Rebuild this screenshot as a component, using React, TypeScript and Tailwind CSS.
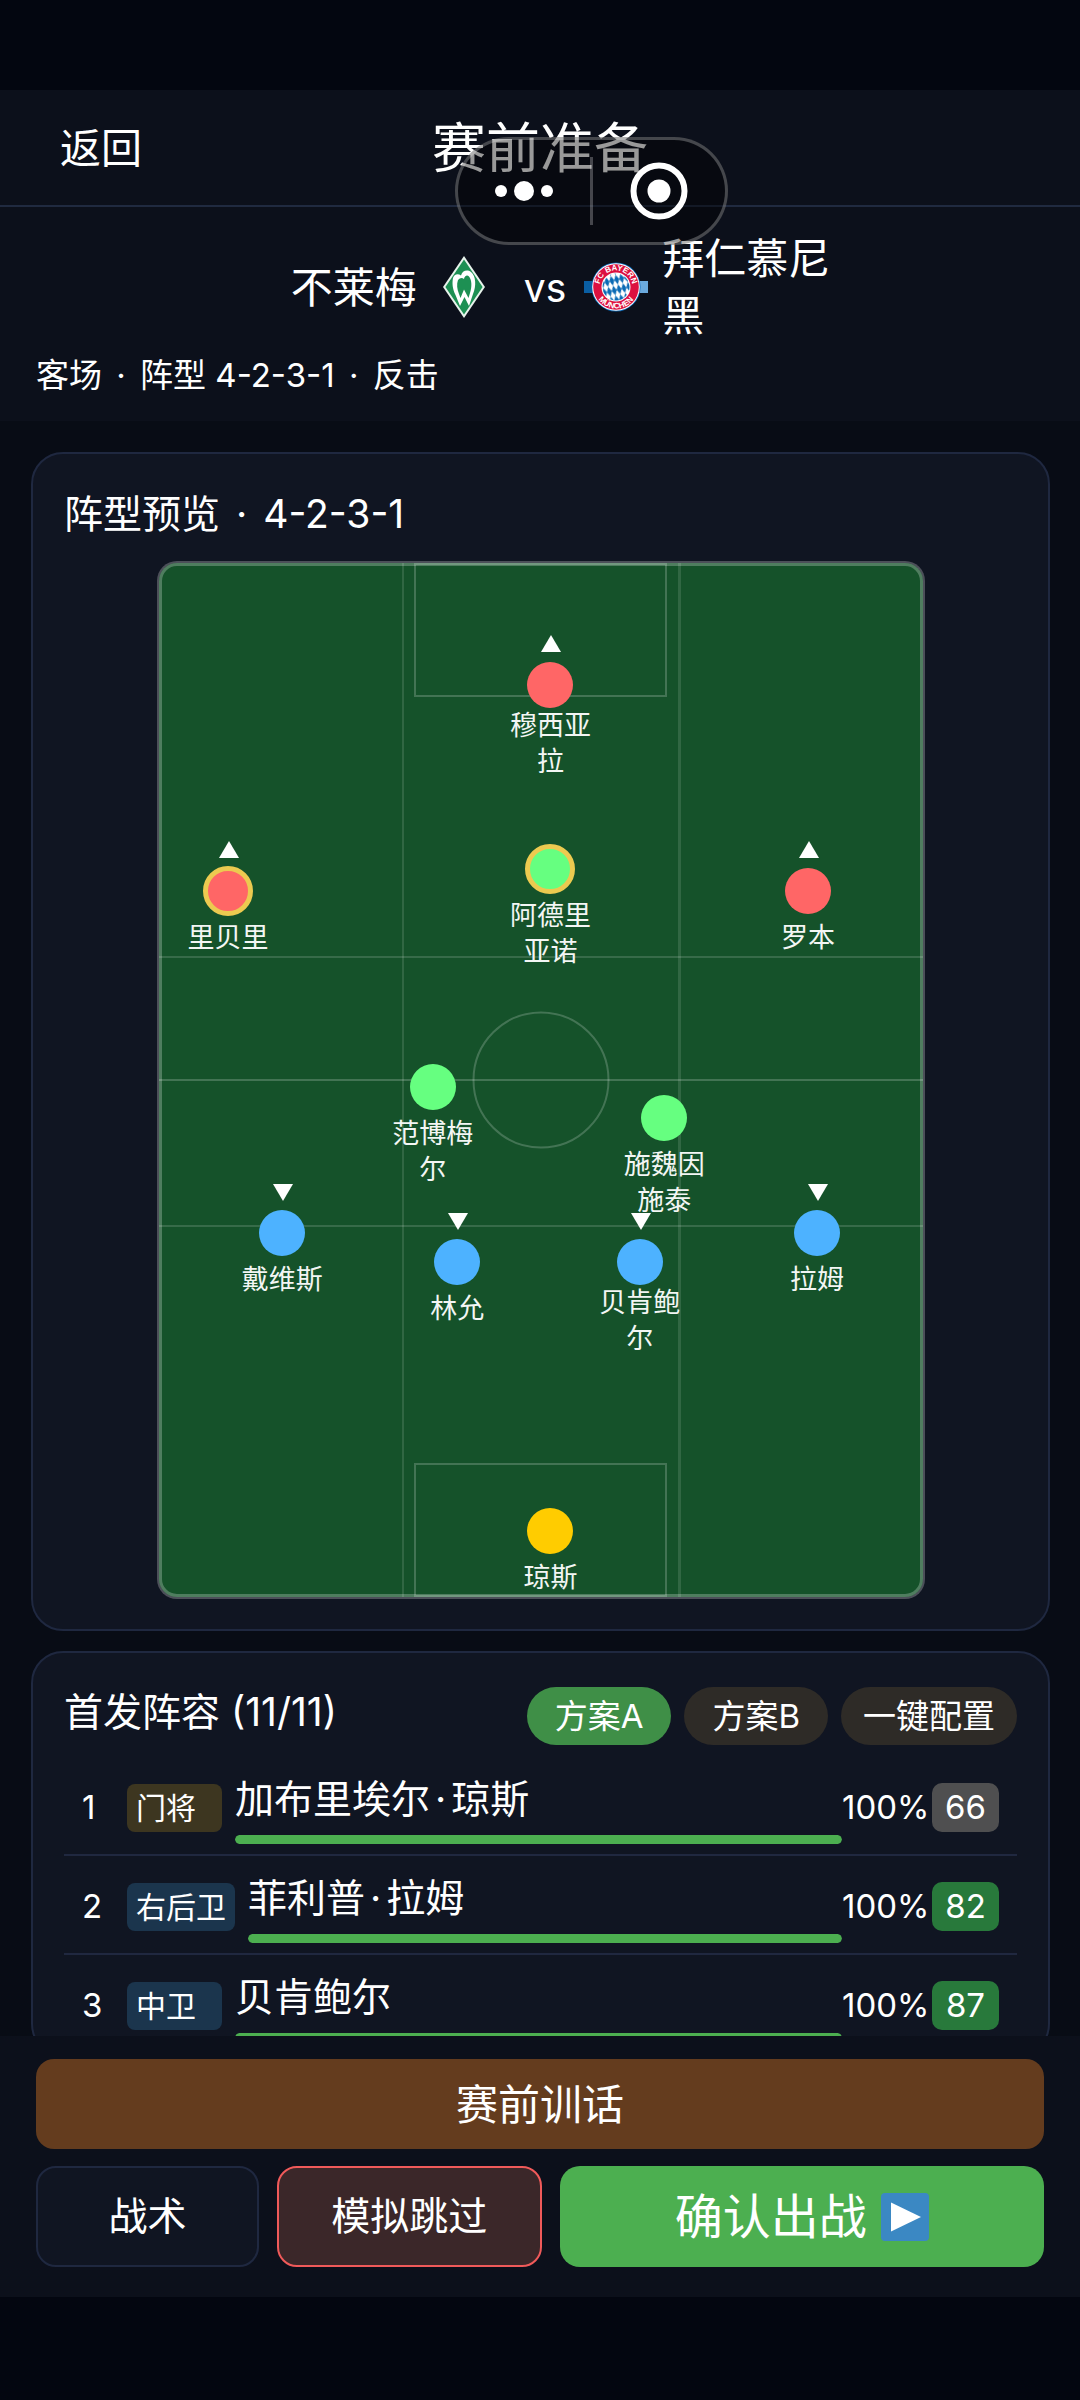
import { CSSProperties } from "react";

type Player = {
  name: string;
  x: number;
  y: number;
  color: string;
  arrow?: "up" | "down";
  star?: boolean;
};

const RED = "bg-[#ff6666]";
const GREEN = "bg-[#66ff80]";
const BLUE = "bg-[#4db2ff]";
const YELLOW = "bg-[#ffcc00]";

// x / y are percentages of the pitch
const players: Player[] = [
  { name: "穆西亚拉", x: 51.3, y: 11.8, color: RED, arrow: "up" },
  { name: "里贝里", x: 9.1, y: 31.7, color: RED, arrow: "up", star: true },
  { name: "阿德里亚诺", x: 51.3, y: 29.6, color: GREEN, star: true },
  { name: "罗本", x: 85, y: 31.7, color: RED, arrow: "up" },
  { name: "范博梅尔", x: 35.9, y: 50.7, color: GREEN },
  { name: "施魏因施泰", x: 66.2, y: 53.7, color: GREEN },
  { name: "戴维斯", x: 16.2, y: 64.8, color: BLUE, arrow: "down" },
  { name: "林允", x: 39.1, y: 67.6, color: BLUE, arrow: "down" },
  { name: "贝肯鲍尔", x: 63, y: 67.6, color: BLUE, arrow: "down" },
  { name: "拉姆", x: 86.2, y: 64.8, color: BLUE, arrow: "down" },
  { name: "琼斯", x: 51.3, y: 93.6, color: YELLOW },
];

const lineup = [
  { no: 1, pos: "门将", name: "加布里埃尔·琼斯", fit: 100, rating: 66, tag: "bg-[#3d3620]", box: "bg-[#4f4f50]" },
  { no: 2, pos: "右后卫", name: "菲利普·拉姆", fit: 100, rating: 82, tag: "bg-[#1b354d]", box: "bg-[#28793b]" },
  { no: 3, pos: "中卫", name: "贝肯鲍尔", fit: 100, rating: 87, tag: "bg-[#1b354d]", box: "bg-[#28793b]" },
];

// Gives every middle dot in a label some air on both sides
function Dotted({ text }: { text: string }) {
  return (
    <>
      {text.split("·").map((part, i) => (
        <span key={i}>
          {i > 0 && <span className="mx-[5px]">·</span>}
          {part}
        </span>
      ))}
    </>
  );
}

function BremenLogo() {
  return (
    <svg viewBox="0 0 42 62" className="h-[62px] w-[42px]" aria-hidden="true">
      <path d="M21 0 42 31 21 62 0 31Z" fill="#e8f3ec" />
      <path d="M21 3.500 39.600 31 21 58.500 2.400 31Z" fill="#1d9053" />
      <path
        d="M10 22C11 18 15 17 18 19.500C19 15 24 13 28 16C33 20 33.500 30 30 38L26 50L21.500 41L17 50L12.500 39C9.500 33 9 27 10 22ZM15 24C13.500 28 14 33 16 38L17.500 42L21 33.500L25.500 42L27 37C29 31 29 24 26 20.500C24 18.500 21.500 20 21 23Q18 20.500 15 24Z"
        fill="#fff"
        fillRule="evenodd"
      />
    </svg>
  );
}

function BayernLogo() {
  return (
    <svg viewBox="0 0 64 50" className="h-[50px] w-16" aria-hidden="true">
      <defs>
        <pattern id="lozenge" width="5" height="10" patternUnits="userSpaceOnUse" patternTransform="rotate(-14)">
          <rect width="5" height="10" fill="#fff" />
          <path d="M2.500 0 5 5 2.500 10 0 5Z" fill="#0a6ab5" />
        </pattern>
        <path id="arcTop" d="M15.500 25A16.500 16.500 0 0 1 48.500 25" />
        <path id="arcBottom" d="M10.500 25A21.500 21.500 0 0 0 53.500 25" />
      </defs>
      <rect x="0" y="19" width="14" height="12" fill="#0a5ea3" />
      <rect x="50" y="19" width="14" height="12" fill="#6ba9dd" />
      <circle cx="32" cy="25" r="24.500" fill="#0a66b2" />
      <circle cx="32" cy="25" r="23.800" fill="#fff" />
      <circle cx="32" cy="25" r="22.800" fill="#dc1140" />
      <circle cx="32" cy="25" r="14.500" fill="#fff" />
      <circle cx="32" cy="25" r="13.500" fill="url(#lozenge)" />
      <text fontFamily="Liberation Sans, sans-serif" fontSize="8" fontWeight="700" fill="#fff" textAnchor="middle">
        <textPath href="#arcTop" startOffset="50%">
          FC BAYERN
        </textPath>
      </text>
      <text fontFamily="Liberation Sans, sans-serif" fontSize="8" fontWeight="700" fill="#fff" textAnchor="middle">
        <textPath href="#arcBottom" startOffset="50%">
          MÜNCHEN
        </textPath>
      </text>
    </svg>
  );
}

function Capsule() {
  return (
    <div className="absolute top-[137px] left-[455px] z-20 flex h-[108px] w-[273px] items-center rounded-full border-3 border-white/25 bg-black/40">
      <button type="button" aria-label="更多" className="flex flex-1 justify-center">
        <svg viewBox="0 0 58 20" className="h-5 w-[58px]" fill="#fff">
          <circle cx="6" cy="10" r="6" />
          <circle cx="29" cy="10" r="10" />
          <circle cx="52" cy="10" r="6" />
        </svg>
      </button>
      <span className="h-[68px] w-[3px] bg-white/25" />
      <button type="button" aria-label="关闭" className="flex flex-1 justify-center">
        <svg viewBox="0 0 58 58" className="size-[58px]">
          <circle cx="29" cy="29" r="25.500" fill="none" stroke="#fff" strokeWidth="6" />
          <circle cx="29" cy="29" r="11.500" fill="#fff" />
        </svg>
      </button>
    </div>
  );
}

function Marker({ player }: { player: Player }) {
  const pos: CSSProperties = { left: `${player.x}%`, top: `${player.y}%` };
  const tight = player.arrow && player.name.length > 3;
  return (
    <div className="absolute size-0" style={pos}>
      {player.arrow && (
        <svg viewBox="0 0 20 18" className="absolute -top-[50px] -left-[9px] h-[18px] w-5" fill="#fff" aria-hidden="true">
          <path d={player.arrow === "up" ? "M10 0 20 17H0Z" : "M0 1H20L10 18Z"} />
        </svg>
      )}
      <span
        className={`absolute -top-[23px] -left-[23px] size-[46px] rounded-full ${player.color} ${
          player.star ? "outline-5 -outline-offset-3 outline-[#ecca50]" : ""
        }`}
      />
      <span
        className={`absolute -left-[42px] w-[84px] text-center text-[27px] leading-9 break-all text-[#f3f6f4] ${
          tight ? "top-[23px]" : "top-[29px]"
        }`}
      >
        {player.name}
      </span>
    </div>
  );
}

function Pitch() {
  return (
    <div className="relative mx-auto aspect-[768/1038] w-[81%] max-w-[768px] rounded-[20px] border-2 border-white/25 bg-[#15522a] bg-clip-padding inset-ring-3 inset-ring-white/25">
      <div className="absolute inset-y-0 left-[32%] w-[2px] -translate-x-1/2 bg-white/12" />
      <div className="absolute inset-y-0 left-[68%] w-[3px] bg-white/12" />
      <div className="absolute inset-x-0 top-[38%] h-[2px] bg-white/15" />
      <div className="absolute inset-x-0 top-1/2 h-[2px] -translate-y-1/2 bg-white/20" />
      <div className="absolute inset-x-0 top-[64%] h-[2px] bg-white/15" />
      <div className="absolute top-0 left-[33.5%] h-[13%] w-[33%] border-2 border-white/20" />
      <div className="absolute bottom-0 left-[33.5%] h-[13%] w-[33%] border-2 border-white/20" />
      <div className="absolute top-1/2 left-1/2 size-[137px] -translate-1/2 rounded-full border-2 border-white/20" />
      {players.map((p) => (
        <Marker key={p.name} player={p} />
      ))}
    </div>
  );
}

export default function App() {
  return (
    <div className="relative flex h-screen flex-col overflow-hidden bg-[#030610] pt-[90px] pb-[103px] font-['Inter','Noto_Sans_CJK_SC',sans-serif] text-white">
      <Capsule />

      <header className="grid h-[117px] shrink-0 grid-cols-3 items-center border-b-2 border-[#202a40] bg-[#0c101b] px-[60px] pt-[2px]">
        <button type="button" className="justify-self-start text-[41px]">
          返回
        </button>
        <h1 className="text-center text-[54px] whitespace-nowrap">赛前准备</h1>
      </header>

      <section className="shrink-0 bg-[#0c101b] px-9 pt-[23px] pb-[23px]">
        <div className="mx-auto grid w-fit grid-cols-[1fr_auto_1fr] items-center pl-[10px] text-[42px] leading-[57px]">
          <div className="flex items-center justify-end gap-[26px] pr-[39px]">
            <span className="whitespace-nowrap">不莱梅</span>
            <BremenLogo />
          </div>
          <span className="text-[39px]">vs</span>
          <div className="flex items-center gap-[14px] pl-[18px]">
            <BayernLogo />
            <span className="w-[176px] break-all">拜仁慕尼黑</span>
          </div>
        </div>
        <p className="mt-2 text-[33px] leading-[46px]">
          <Dotted text="客场 · 阵型 4-2-3-1 · 反击" />
        </p>
      </section>

      <main className="flex min-h-0 flex-1 flex-col gap-5 overflow-hidden bg-[#080c15] pt-[31px] pr-[30px] pl-[31px]">
        <section className="shrink-0 rounded-[32px] border-2 border-[#1f2840] bg-[#101522] px-[31px] pt-[31px] pb-[30px]">
          <h2 className="mb-[18px] text-[39px] leading-[58px]">
            <Dotted text="阵型预览 · 4-2-3-1" />
          </h2>
          <Pitch />
        </section>

        <section className="shrink-0 rounded-[32px] border-2 border-[#1f2840] bg-[#101522] px-[31px] pt-[34px]">
          <div className="flex items-start justify-between pb-3">
            <h2 className="text-[39px] leading-[50px]">首发阵容 (11/11)</h2>
            <div className="flex gap-[13px] text-[33px] leading-[58px]">
              <button type="button" className="rounded-full bg-[#3f8f47] px-7">
                方案A
              </button>
              <button type="button" className="rounded-full bg-[#2e2b27] px-7">
                方案B
              </button>
              <button type="button" className="rounded-full bg-[#2e2b27] px-[22px]">
                一键配置
              </button>
            </div>
          </div>
          <ol>
            {lineup.map((p) => (
              <li key={p.no} className="flex h-[99px] items-center border-b-2 border-[#202840] px-[18px] pt-1 text-[33px]">
                <span className="w-[45px]">{p.no}</span>
                <span className={`min-w-[95px] rounded-lg px-[9px] text-[30px] leading-[48px] ${p.tag}`}>{p.pos}</span>
                <div className="ml-[13px] flex-1">
                  <div className="text-[39px] leading-[56px]">
                    <Dotted text={p.name} />
                  </div>
                  <div className="mt-2 h-[9px] overflow-hidden rounded-full">
                    <div className="h-full rounded-full bg-[#4caf50]" style={{ width: `${p.fit}%` }} />
                  </div>
                </div>
                <span className="w-[90px]">{p.fit}%</span>
                <span className={`w-[67px] rounded-[10px] text-center leading-[49px] ${p.box}`}>{p.rating}</span>
              </li>
            ))}
          </ol>
        </section>
      </main>

      <footer className="shrink-0 bg-[#0c101b] px-9 pt-[23px] pb-[30px]">
        <button type="button" className="h-[90px] w-full rounded-[18px] bg-[#643c1e] text-[42px]">
          赛前训话
        </button>
        <div className="mt-[17px] grid h-[101px] grid-cols-[223fr_264fr_484fr] gap-[18px] text-[39px]">
          <button type="button" className="rounded-[20px] border-2 border-[#1f2840] bg-[#101522]">
            战术
          </button>
          <button type="button" className="rounded-[20px] border-2 border-[#f05a5a] bg-[#3b2729]">
            模拟跳过
          </button>
          <button type="button" className="flex items-center justify-center gap-[14px] rounded-[20px] bg-[#4caf50] text-[48px]">
            确认出战
            <svg viewBox="0 0 48 48" className="size-12" aria-hidden="true">
              <rect width="48" height="48" rx="4" fill="#3b88c3" />
              <path d="M10 9.500 40 24 10 38.500Z" fill="#fff" />
            </svg>
          </button>
        </div>
      </footer>
    </div>
  );
}
